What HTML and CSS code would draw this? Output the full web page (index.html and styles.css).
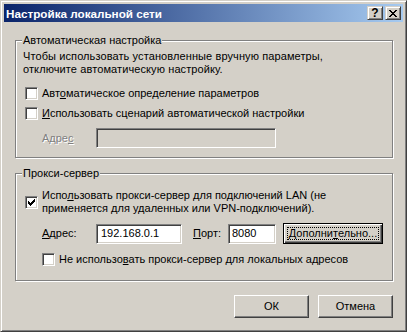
FILE: index.html
```html
<!DOCTYPE html>
<html lang="ru">
<head>
    <meta charset="UTF-8">
    <title>Настройка локальной сети</title>
    <link rel="stylesheet" href="styles.css">
</head>
<body>
    <div class="window">
        <div class="titlebar">
            <span class="title">Настройка локальной сети</span>
            <div class="caption-buttons">
                <span class="cap-btn cap-help">?</span>
                <span class="cap-btn">
                    <svg width="8" height="7" viewBox="0 0 8 7">
                        <path d="M0 0h2v1h-2z M6 0h2v1h-2z M1 1h2v1h-2z M5 1h2v1h-2z M2 2h4v1h-4z M3 3h2v1h-2z M2 4h4v1h-4z M1 5h2v1h-2z M5 5h2v1h-2z M0 6h2v1h-2z M6 6h2v1h-2z" fill="#000"/>
                    </svg>
                </span>
            </div>
        </div>

        <div class="content">
            <!-- автоматическая настройка -->
            <fieldset class="group group-auto">
                <legend>Автоматическая настройка</legend>
                <p class="note">Чтобы использовать установленные вручную параметры,<br>отключите автоматическую настройку.</p>
                <div class="check check-first"><span class="box"></span><span>Авт<u>о</u>матическое определение параметров</span></div>
                <div class="check check-second"><span class="box"></span><span><u>И</u>спользовать сценарий автоматической настройки</span></div>
                <div class="field-row field-row-auto">
                    <span class="field-label disabled">Адре<u>с</u></span>
                    <span class="input input-wide input-disabled"></span>
                </div>
            </fieldset>

            <!-- прокси -->
            <fieldset class="group group-proxy">
                <legend>Прокси-сервер</legend>
                <div class="check check-multi">
                    <span class="box">
                        <svg width="7" height="7" viewBox="0 0 7 7">
                            <path d="M0 2h1v3h-1z M1 3h1v3h-1z M2 4h1v3h-1z M3 3h1v3h-1z M4 2h1v3h-1z M5 1h1v3h-1z M6 0h1v3h-1z" fill="#000"/>
                        </svg>
                    </span>
                    <span>Испо<u>л</u>ьзовать прокси-сервер для подключений LAN (не<br>применяется для удаленных или VPN-подключений).</span>
                </div>
                <div class="field-row field-row-proxy">
                    <span class="field-label"><u>А</u>дрес:</span>
                    <span class="input input-addr">192.168.0.1</span>
                    <span class="field-label port-label"><u>П</u>орт:</span>
                    <span class="input input-port">8080</span>
                    <span class="btn btn-default"><span class="focus">Дополни<u>т</u>ельно...</span></span>
                </div>
                <div class="check check-sub"><span class="box"></span><span>Не использо<u>в</u>ать прокси-сервер для локальных адресов</span></div>
            </fieldset>

            <div class="actions">
                <span class="btn btn-dialog">ОК</span>
                <span class="btn btn-dialog">Отмена</span>
            </div>
        </div>
    </div>
</body>
</html>
```

FILE: styles.css
```css
body {
    margin: 0;
    font-family: "Liberation Sans", Arial, sans-serif;
    font-size: 11px;
    line-height: 13px;
    color: #000;
    background-color: #d4d0c8;
}
u {
    text-decoration-thickness: 1px;
    text-underline-offset: 1px;
}
.window {
    width: 407px;
    height: 332px;
    box-sizing: border-box;
    border: 1px solid;
    border-color: #d4d0c8 #404040 #404040 #d4d0c8;
    box-shadow: inset 1px 1px #fff, inset -1px -1px #808080;
    padding: 3px;
    background-color: #d4d0c8;
}
.titlebar {
    height: 18px;
    display: flex;
    align-items: center;
    justify-content: space-between;
    padding: 0 2px;
    background: linear-gradient(to right, #0a246a, #a6caf0);
    color: #fff;
}
.title {
    font-weight: bold;
    font-size: 11.7px;
}
.caption-buttons {
    display: flex;
    gap: 2px;
}
.cap-btn {
    width: 16px;
    height: 14px;
    box-sizing: border-box;
    border: 1px solid;
    border-color: #d4d0c8 #404040 #404040 #d4d0c8;
    box-shadow: inset 1px 1px #fff, inset -1px -1px #808080;
    background-color: #d4d0c8;
    display: flex;
    align-items: center;
    justify-content: center;
    color: #000;
}
.cap-help {
    font-weight: bold;
    font-size: 12px;
    line-height: 12px;
}
.content {
    padding: 12px 10px 0 11px;
}
.group {
    margin: 0;
    width: 378px;
    min-width: 0;
    box-sizing: border-box;
    border: 1px solid #808080;
    box-shadow: inset 1px 1px #fff, 1px 1px #fff;
    padding: 3px 7px 9px 7px;
}
.group legend {
    padding: 0 1px;
    margin-left: -1px;
    background-color: #d4d0c8;
}
.group-proxy {
    margin-top: 9px;
    padding-bottom: 14px;
}
.note {
    margin: 0;
    letter-spacing: 0.1px;
}
.check {
    display: flex;
    align-items: center;
    gap: 4px;
    margin-left: 2px;
}
.check-first {
    margin-top: 11px;
}
.check-second {
    margin-top: 7px;
}
.check-multi {
    margin-top: 6px;
}
.check-sub {
    margin-top: 9px;
    margin-left: 19px;
}
.box {
    width: 13px;
    height: 13px;
    flex-shrink: 0;
    box-sizing: border-box;
    border: 1px solid;
    border-color: #808080 #fff #fff #808080;
    box-shadow: inset 1px 1px #404040, inset -1px -1px #d4d0c8;
    background-color: #fff;
    display: flex;
    align-items: center;
    justify-content: center;
}
.field-row {
    display: flex;
    align-items: center;
    margin-left: 19px;
}
.field-row-auto {
    margin-top: 8px;
}
.field-row-proxy {
    margin-top: 8px;
}
.field-label {
    width: 54px;
    flex-shrink: 0;
}
.disabled {
    color: #808080;
    text-shadow: 1px 1px #fff;
}
.port-label {
    width: 35px;
    margin-left: 11px;
}
.input {
    height: 20px;
    box-sizing: border-box;
    border: 1px solid;
    border-color: #808080 #fff #fff #808080;
    box-shadow: inset 1px 1px #404040, inset -1px -1px #d4d0c8;
    background-color: #fff;
    padding: 0 4px;
    display: flex;
    align-items: center;
}
.input-disabled {
    background-color: #d4d0c8;
}
.input-wide {
    width: 180px;
}
.input-addr {
    width: 86px;
}
.input-port {
    width: 48px;
    padding-left: 3px;
}
.btn {
    box-sizing: border-box;
    border: 1px solid;
    border-color: #fff #404040 #404040 #fff;
    box-shadow: inset -1px -1px #808080;
    background-color: #d4d0c8;
    display: flex;
    align-items: center;
    justify-content: center;
}
.btn-default {
    width: 100px;
    height: 21px;
    margin-left: 7px;
    border-color: #000;
    box-shadow: inset 1px 1px #fff, inset -1px -1px #404040, inset -2px -2px #808080;
    padding: 3px;
}
.focus {
    flex: 1;
    align-self: stretch;
    border: 1px dotted #000;
    display: flex;
    align-items: center;
    justify-content: center;
}
.actions {
    display: flex;
    justify-content: flex-end;
    gap: 9px;
    margin-top: 14px;
}
.btn-dialog {
    width: 75px;
    height: 23px;
}
```
